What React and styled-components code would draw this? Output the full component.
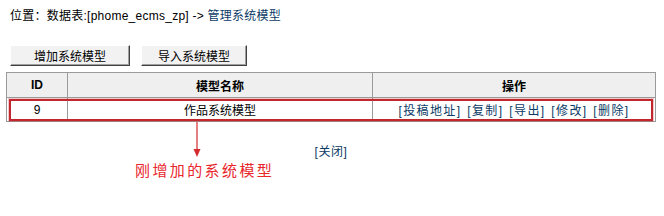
import React from "react";
import styled, { createGlobalStyle } from "styled-components";

const Global = createGlobalStyle`
  html, body { margin: 0; padding: 0; background: #fff; }
  body { font-family: "Liberation Sans", "Noto Sans CJK SC", sans-serif; font-size: 12px; color: #000; }
`;

const Page = styled.div`
  position: relative;
  width: 664px;
  height: 216px;
  padding: 9px 8px 0 6px;
  box-sizing: border-box;
`;

const Location = styled.div`
  padding-left: 4px;
  line-height: 14px;
  height: 14px;
  letter-spacing: 0.25px;
`;

const Link = styled.a`
  color: #0b3a66;
  text-decoration: none;
`;

const Toolbar = styled.div`
  display: flex;
  gap: 11px;
  margin-top: 22px;
  padding-left: 4px;
`;

const Button = styled.button`
  width: ${(p) => p.$w}px;
  height: 21px;
  padding: 0;
  font-family: "Liberation Sans", "Noto Sans CJK SC", sans-serif;
  font-size: 12px;
  color: #000;
  background: #f2f2f2;
  border: 1px solid;
  border-color: #fff #404040 #404040 #fff;
  box-shadow: inset -1px -1px 0 #a0a0a0;
`;

const TableWrap = styled.div`
  position: relative;
  margin-top: 6px;
`;

const Table = styled.table`
  width: 650px;
  border-collapse: collapse;
  border: 1px solid #9a9a9a;
  table-layout: fixed;
`;

const Th = styled.th`
  height: 24px;
  background: #efefef;
  border: 1px solid #9a9a9a;
  font-weight: bold;
  font-size: 12px;
  text-align: center;
  padding: 0;
  width: ${(p) => (p.$w ? p.$w + "px" : "auto")};
`;

const Td = styled.td`
  height: 23px;
  border: 1px solid #9a9a9a;
  text-align: center;
  padding: 0;
  background: #fff;
`;

const Ops = styled(Td)`
  letter-spacing: 1.4px;
  word-spacing: 1px;
`;

const Highlight = styled.div`
  position: absolute;
  left: 3px;
  top: 27px;
  width: 640px;
  height: 18px;
  border: 2px solid #c1272d;
  box-shadow: 0 0 0 1px rgba(193, 39, 45, 0.25);
`;

const Close = styled.div`
  width: 650px;
  text-align: center;
  margin-top: 23px;
  line-height: 14px;
  letter-spacing: 0.6px;
`;

const Arrow = styled.svg`
  position: absolute;
  left: 193px;
  top: 122px;
`;

const Note = styled.div`
  position: absolute;
  left: 135px;
  top: 161px;
  color: #e8262b;
  font-family: "Noto Sans CJK SC", sans-serif;
  font-size: 15px;
  letter-spacing: 2.4px;
  line-height: 18px;
`;

export default function App() {
  return (
    <>
      <Global />
      <Page>
        <Location>
          位置：数据表:[phome_ecms_zp] -&gt; <Link href="#">管理系统模型</Link>
        </Location>
        <Toolbar>
          <Button $w={120}>增加系统模型</Button>
          <Button $w={106}>导入系统模型</Button>
        </Toolbar>
        <TableWrap>
          <Table>
            <thead>
              <tr>
                <Th $w={60}>ID</Th>
                <Th $w={304}>模型名称</Th>
                <Th>操作</Th>
              </tr>
            </thead>
            <tbody>
              <tr>
                <Td>9</Td>
                <Td>作品系统模型</Td>
                <Ops>
                  <Link href="#">[投稿地址]</Link> <Link href="#">[复制]</Link>{" "}
                  <Link href="#">[导出]</Link> <Link href="#">[修改]</Link>{" "}
                  <Link href="#">[删除]</Link>
                </Ops>
              </tr>
            </tbody>
          </Table>
          <Highlight />
        </TableWrap>
        <Close>
          <Link href="#">[关闭]</Link>
        </Close>
        <Arrow width="8" height="36" viewBox="0 0 8 36">
          <line x1="4" y1="0" x2="4" y2="30" stroke="#d42a2f" strokeWidth="1.2" />
          <polygon points="0.5,27 7.5,27 4,35" fill="#d42a2f" />
        </Arrow>
        <Note>刚增加的系统模型</Note>
      </Page>
    </>
  );
}
